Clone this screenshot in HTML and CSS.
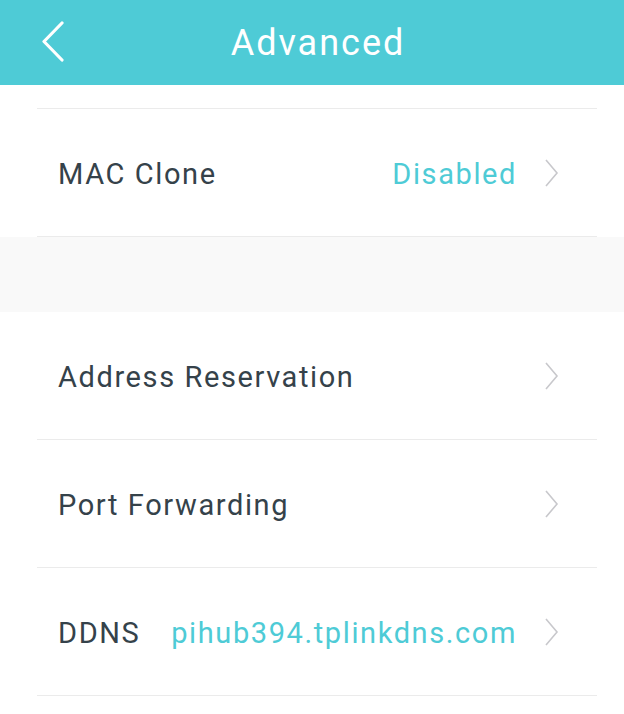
FILE: index.html
```html
<!DOCTYPE html>
<html>
<head>
<meta charset="utf-8">
<link rel="stylesheet" href="styles.css">
</head>
<body>
<header class="topbar">
  <svg class="back" width="24" height="42" viewBox="0 0 24 42"><polyline points="21,2 3,20.5 21,39" fill="none" stroke="#fff" stroke-width="3.2" stroke-linecap="round" stroke-linejoin="round"/></svg>
  <h1 class="title">Advanced</h1>
</header>
<section class="group">
  <div class="topline"></div>
  <div class="row">
    <span class="label">MAC Clone</span>
    <span class="value">Disabled</span>
    <svg class="chev" width="16" height="30" viewBox="0 0 16 30"><polyline points="2,2 13,15 2,28" fill="none" stroke="#c8c8cc" stroke-width="1.6"/></svg>
  </div>
</section>
<div class="spacer"></div>
<section class="group">
  <div class="row">
    <span class="label">Address Reservation</span>
    <span class="value"></span>
    <svg class="chev" width="16" height="30" viewBox="0 0 16 30"><polyline points="2,2 13,15 2,28" fill="none" stroke="#c8c8cc" stroke-width="1.6"/></svg>
  </div>
  <div class="row">
    <span class="label">Port Forwarding</span>
    <span class="value"></span>
    <svg class="chev" width="16" height="30" viewBox="0 0 16 30"><polyline points="2,2 13,15 2,28" fill="none" stroke="#c8c8cc" stroke-width="1.6"/></svg>
  </div>
  <div class="row">
    <span class="label">DDNS</span>
    <span class="value">pihub394.tplinkdns.com</span>
    <svg class="chev" width="16" height="30" viewBox="0 0 16 30"><polyline points="2,2 13,15 2,28" fill="none" stroke="#c8c8cc" stroke-width="1.6"/></svg>
  </div>
</section>
</body>
</html>
```
FILE: styles.css
```css
* { box-sizing: border-box; }
html, body { margin: 0; padding: 0; background: #fff; }
body { font-family: Roboto, "Noto Sans", sans-serif; width: 624px; height: 714px; overflow: hidden; }
.topbar {
  height: 85px;
  background: #4ecbd6;
  display: flex;
  align-items: center;
  position: relative;
}
.back { position: absolute; left: 41px; top: 21px; }
.title {
  margin: 0;
  flex: 1;
  text-align: center;
  padding-left: 12px;
  color: #fff;
  font-weight: 400;
  font-size: 36px;
  letter-spacing: 2px;
}
.group { padding: 0 27px 0 37px; }
.topline { height: 1px; background: #ebebeb; margin-top: 23px; }
.row {
  height: 128px;
  border-bottom: 1px solid #ebebeb;
  display: flex;
  align-items: center;
  padding-left: 21px;
  padding-right: 37px;
}
.label { color: #35424a; font-size: 29px; letter-spacing: 1.6px; padding-top: 2px; }
.value { flex: 1; text-align: right; color: #4ecbd6; font-size: 29px; margin-right: 27px; letter-spacing: 1.6px; padding-top: 2px; }
.chev { flex: none; }
.spacer { height: 75px; background: #f9f9f9; }
```
